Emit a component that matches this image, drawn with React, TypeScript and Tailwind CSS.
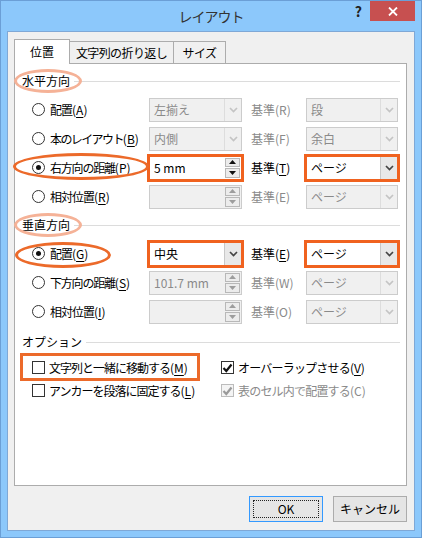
import React from "react";
import clsx from "clsx";

const ORANGE = "outline-[3px] outline-solid outline-[#f0621f] -outline-offset-1";

function Radio({ checked }: { checked?: boolean }) {
  return (
    <span className="w-[13px] h-[13px] rounded-full border border-[#333] bg-white flex items-center justify-center shrink-0">
      {checked && <span className="w-[5px] h-[5px] rounded-full bg-[#111]" />}
    </span>
  );
}

function Check({ checked, disabled }: { checked?: boolean; disabled?: boolean }) {
  return (
    <span
      className={clsx(
        "w-[13px] h-[13px] border flex items-center justify-center shrink-0",
        disabled ? "border-[#bcbcbc] bg-[#f4f4f4]" : "border-[#333] bg-white"
      )}
    >
      {checked && (
        <svg width="11" height="10" viewBox="0 0 11 10">
          <path d="M1.5 5l2.8 3L9.5 1.5" fill="none" stroke={disabled ? "#9a9a9a" : "#111"} strokeWidth="2.2" />
        </svg>
      )}
    </span>
  );
}

// label text with a mnemonic key: "配置" + (A)
function Lbl({ jp, k, u = true, t = "tracking-[-1px]" }: { jp: string; k: string; u?: boolean; t?: string }) {
  return (
    <span className="leading-none whitespace-nowrap">
      <span className={t}>{jp}</span>({u ? <span className="underline underline-offset-[2px]">{k}</span> : k})
    </span>
  );
}

function Chevron({ disabled }: { disabled?: boolean }) {
  return (
    <svg width="9" height="6" viewBox="0 0 9 6">
      <path d="M1 1l3.5 3.5L8 1" fill="none" stroke={disabled ? "#c4c4c4" : "#444"} strokeWidth="1.7" />
    </svg>
  );
}

function Combo({ value, disabled, highlight, w = "w-[93px]" }: { value: string; disabled?: boolean; highlight?: boolean; w?: string }) {
  return (
    <div
      className={clsx(
        w,
        "h-[24px] flex border shrink-0",
        disabled ? "bg-[#f0f0f0] border-[#cccccc]" : "bg-white border-[#acacac]",
        highlight && ORANGE
      )}
    >
      <span className={clsx("flex-1 pl-[4px] flex items-center leading-none", disabled ? "text-[#8a8a8a]" : "text-black")}>
        {value}
      </span>
      <span
        className={clsx(
          "w-[17px] border-l flex items-center justify-center",
          disabled ? "border-[#dddddd]" : "bg-[#e8e8e8] border-[#c8c8c8]"
        )}
      >
        <Chevron disabled={disabled} />
      </span>
    </div>
  );
}

function Tri({ up, disabled }: { up?: boolean; disabled?: boolean }) {
  return (
    <svg width="7" height="4" viewBox="0 0 7 4">
      <path d={up ? "M0 4L3.5 0L7 4Z" : "M0 0L3.5 4L7 0Z"} fill={disabled ? "#9d9d9d" : "#111"} />
    </svg>
  );
}

function Spin({ value, disabled, highlight }: { value: string; disabled?: boolean; highlight?: boolean }) {
  return (
    <div
      className={clsx(
        "w-[93px] h-[24px] flex items-center border shrink-0",
        disabled ? "bg-[#f0f0f0] border-[#cccccc]" : "bg-white border-[#acacac]",
        highlight && ORANGE
      )}
    >
      <span className={clsx("flex-1 pl-[4px] leading-none", disabled ? "text-[#8a8a8a]" : "text-black")}>{value}</span>
      <span className="w-[15px] h-[20px] mr-[1px] flex flex-col gap-px">
        <span className="flex-1 border border-[#b8b8b8] bg-[#ececec] flex items-center justify-center">
          <Tri up disabled={disabled} />
        </span>
        <span className="flex-1 border border-[#b8b8b8] bg-[#ececec] flex items-center justify-center">
          <Tri disabled={disabled} />
        </span>
      </span>
    </div>
  );
}

function Header({ text, ellipse }: { text: string; ellipse?: boolean }) {
  return (
    <div className="relative flex items-center h-[18px] pl-[7px] pr-[6px]">
      {ellipse && (
        <span className="absolute left-[-1px] top-[-3px] w-[68px] h-[24px] rounded-[50%] border-[3px] border-[#f5b297]" />
      )}
      <span className="leading-none">{text}</span>
      <span className="flex-1 h-px bg-[#dcdcdc] ml-[4px]" />
    </div>
  );
}

function Row({
  label,
  checked,
  control,
  refLabel,
  refEnabled,
  refCombo,
  ellipse,
}: {
  label: React.ReactNode;
  checked?: boolean;
  control: React.ReactNode;
  refLabel: React.ReactNode;
  refEnabled?: boolean;
  refCombo: React.ReactNode;
  ellipse?: string;
}) {
  return (
    <div className="relative flex items-center h-[29px]">
      {ellipse && <span className={clsx("absolute rounded-[50%] border-[3px] border-[#ec6a2a]", ellipse)} />}
      <div className="w-[134px] pl-[17px] flex items-center gap-[5px] shrink-0">
        <Radio checked={checked} />
        {label}
      </div>
      {control}
      <div className={clsx("w-[64px] pl-[9px] leading-none shrink-0", refEnabled ? "text-black" : "text-[#8a8a8a]")}>
        {refLabel}
      </div>
      {refCombo}
    </div>
  );
}

function Tabs() {
  return (
    <div className="flex items-end h-[25px] ml-[6px] -mb-px relative z-10">
      <div className="w-[56px] h-[25px] bg-white border border-b-0 border-[#acacac] flex items-center justify-center leading-none">
        位置
      </div>
      <div className="w-[104px] h-[22px] mb-px bg-[#f0f0f0] border border-l-0 border-b-0 border-[#acacac] flex items-center justify-center leading-none tracking-[-0.6px]">
        文字列の折り返し
      </div>
      <div className="w-[52px] h-[22px] mb-px bg-[#f0f0f0] border border-l-0 border-b-0 border-[#acacac] flex items-center justify-center leading-none tracking-[-0.5px]">
        サイズ
      </div>
    </div>
  );
}

export default function App() {
  return (
    <div className="w-[422px] h-[538px] bg-[#8cc8fb] border border-[#6b9fd6] flex flex-col font-['Noto_Sans_CJK_JP',sans-serif] text-[12px] text-black">
      {/* title bar */}
      <div className="h-[30px] grid grid-cols-[1fr_auto_1fr] shrink-0">
        <div />
        <div className="flex items-center text-[14px] text-[#333] tracking-[-1px] pt-[1px]">レイアウト</div>
        <div className="flex justify-end items-start pr-[6px]">
          <span className="mt-[3px] mr-[8px] text-[14px] font-bold text-[#222] leading-none">?</span>
          <span className="w-[45px] h-[20px] bg-[#c75050] flex items-center justify-center">
            <svg width="10" height="9" viewBox="0 0 10 9">
              <path d="M1 0.5l8 8M9 0.5l-8 8" stroke="#fff" strokeWidth="1.8" />
            </svg>
          </span>
        </div>
      </div>

      {/* client */}
      <div className="mx-[6px] mb-[6px] flex-1 bg-[#f0f0f0] border border-[#7fa8d6] flex flex-col pt-[7px]">
        <Tabs />
        <div className="ml-[6px] w-[393px] h-[423px] bg-white border border-[#acacac] pt-[8px] flex flex-col">
          <Header text="水平方向" ellipse />
          <div className="mt-[5px]">
            <Row
              label={<Lbl jp="配置" k="A" />}
              control={<Combo value="左揃え" disabled />}
              refLabel="基準(R)"
              refCombo={<Combo value="段" disabled w="w-[92px]" />}
            />
            <Row
              label={<Lbl jp="本のレイアウト" k="B" t="tracking-[-1.6px]" />}
              control={<Combo value="内側" disabled />}
              refLabel="基準(F)"
              refCombo={<Combo value="余白" disabled w="w-[92px]" />}
            />
            <Row
              label={<Lbl jp="右方向の距離" k="P" t="tracking-[-1.2px]" />}
              checked
              ellipse="left-[-2px] top-[0px] w-[136px] h-[27px]"
              control={<Spin value="5 mm" highlight />}
              refLabel={<>基準(<span className="underline underline-offset-[2px]">T</span>)</>}
              refEnabled
              refCombo={<Combo value="ページ" highlight w="w-[92px]" />}
            />
            <Row
              label={<Lbl jp="相対位置" k="R" />}
              control={<Spin value="" disabled />}
              refLabel="基準(E)"
              refCombo={<Combo value="ページ" disabled w="w-[92px]" />}
            />
          </div>

          <div className="mt-[5px]">
            <Header text="垂直方向" ellipse />
          </div>
          <div className="mt-[5px]">
            <Row
              label={<Lbl jp="配置" k="G" />}
              checked
              ellipse="left-[0px] top-[3px] w-[96px] h-[26px]"
              control={<Combo value="中央" highlight />}
              refLabel={<>基準(<span className="underline underline-offset-[2px]">E</span>)</>}
              refEnabled
              refCombo={<Combo value="ページ" highlight w="w-[92px]" />}
            />
            <Row
              label={<Lbl jp="下方向の距離" k="S" t="tracking-[-1.2px]" />}
              control={<Spin value="101.7 mm" disabled />}
              refLabel="基準(W)"
              refCombo={<Combo value="ページ" disabled w="w-[92px]" />}
            />
            <Row
              label={<Lbl jp="相対位置" k="I" />}
              control={<Spin value="" disabled />}
              refLabel="基準(O)"
              refCombo={<Combo value="ページ" disabled w="w-[92px]" />}
            />
          </div>

          <div className="mt-[7px]">
            <Header text="オプション" />
          </div>
          <div className="mt-[5px]">
            <div className="relative flex items-center h-[23px]">
              <span className="absolute left-[5px] top-[-3px] w-[180px] h-[28px] border-[3px] border-[#ec6a2a]" />
              <div className="w-[206px] pl-[17px] flex items-center gap-[4px] shrink-0">
                <Check />
                <Lbl jp="文字列と一緒に移動する" k="M" t="tracking-[-1px]" />
              </div>
              <div className="flex items-center gap-[4px]">
                <Check checked />
                <Lbl jp="オーバーラップさせる" k="V" t="tracking-[-0.8px]" />
              </div>
            </div>
            <div className="flex items-center h-[23px]">
              <div className="w-[206px] pl-[17px] flex items-center gap-[4px] shrink-0">
                <Check />
                <Lbl jp="アンカーを段落に固定する" k="L" t="tracking-[-1px]" />
              </div>
              <div className="flex items-center gap-[4px] text-[#8a8a8a]">
                <Check checked disabled />
                <Lbl jp="表のセル内で配置する" k="C" u={false} t="tracking-[-0.8px]" />
              </div>
            </div>
          </div>
        </div>

        {/* buttons */}
        <div className="mt-[10px] flex justify-end gap-[10px] pr-[7px]">
          <button className="w-[74px] h-[26px] bg-[#e5e5e5] border border-[#3399ff] p-[3px]">
            <span className="w-full h-full border border-dotted border-[#222] flex items-center justify-center leading-none">
              OK
            </span>
          </button>
          <button className="w-[74px] h-[26px] bg-[#e5e5e5] border border-[#acacac] flex items-center justify-center leading-none">
            キャンセル
          </button>
        </div>
      </div>
    </div>
  );
}
